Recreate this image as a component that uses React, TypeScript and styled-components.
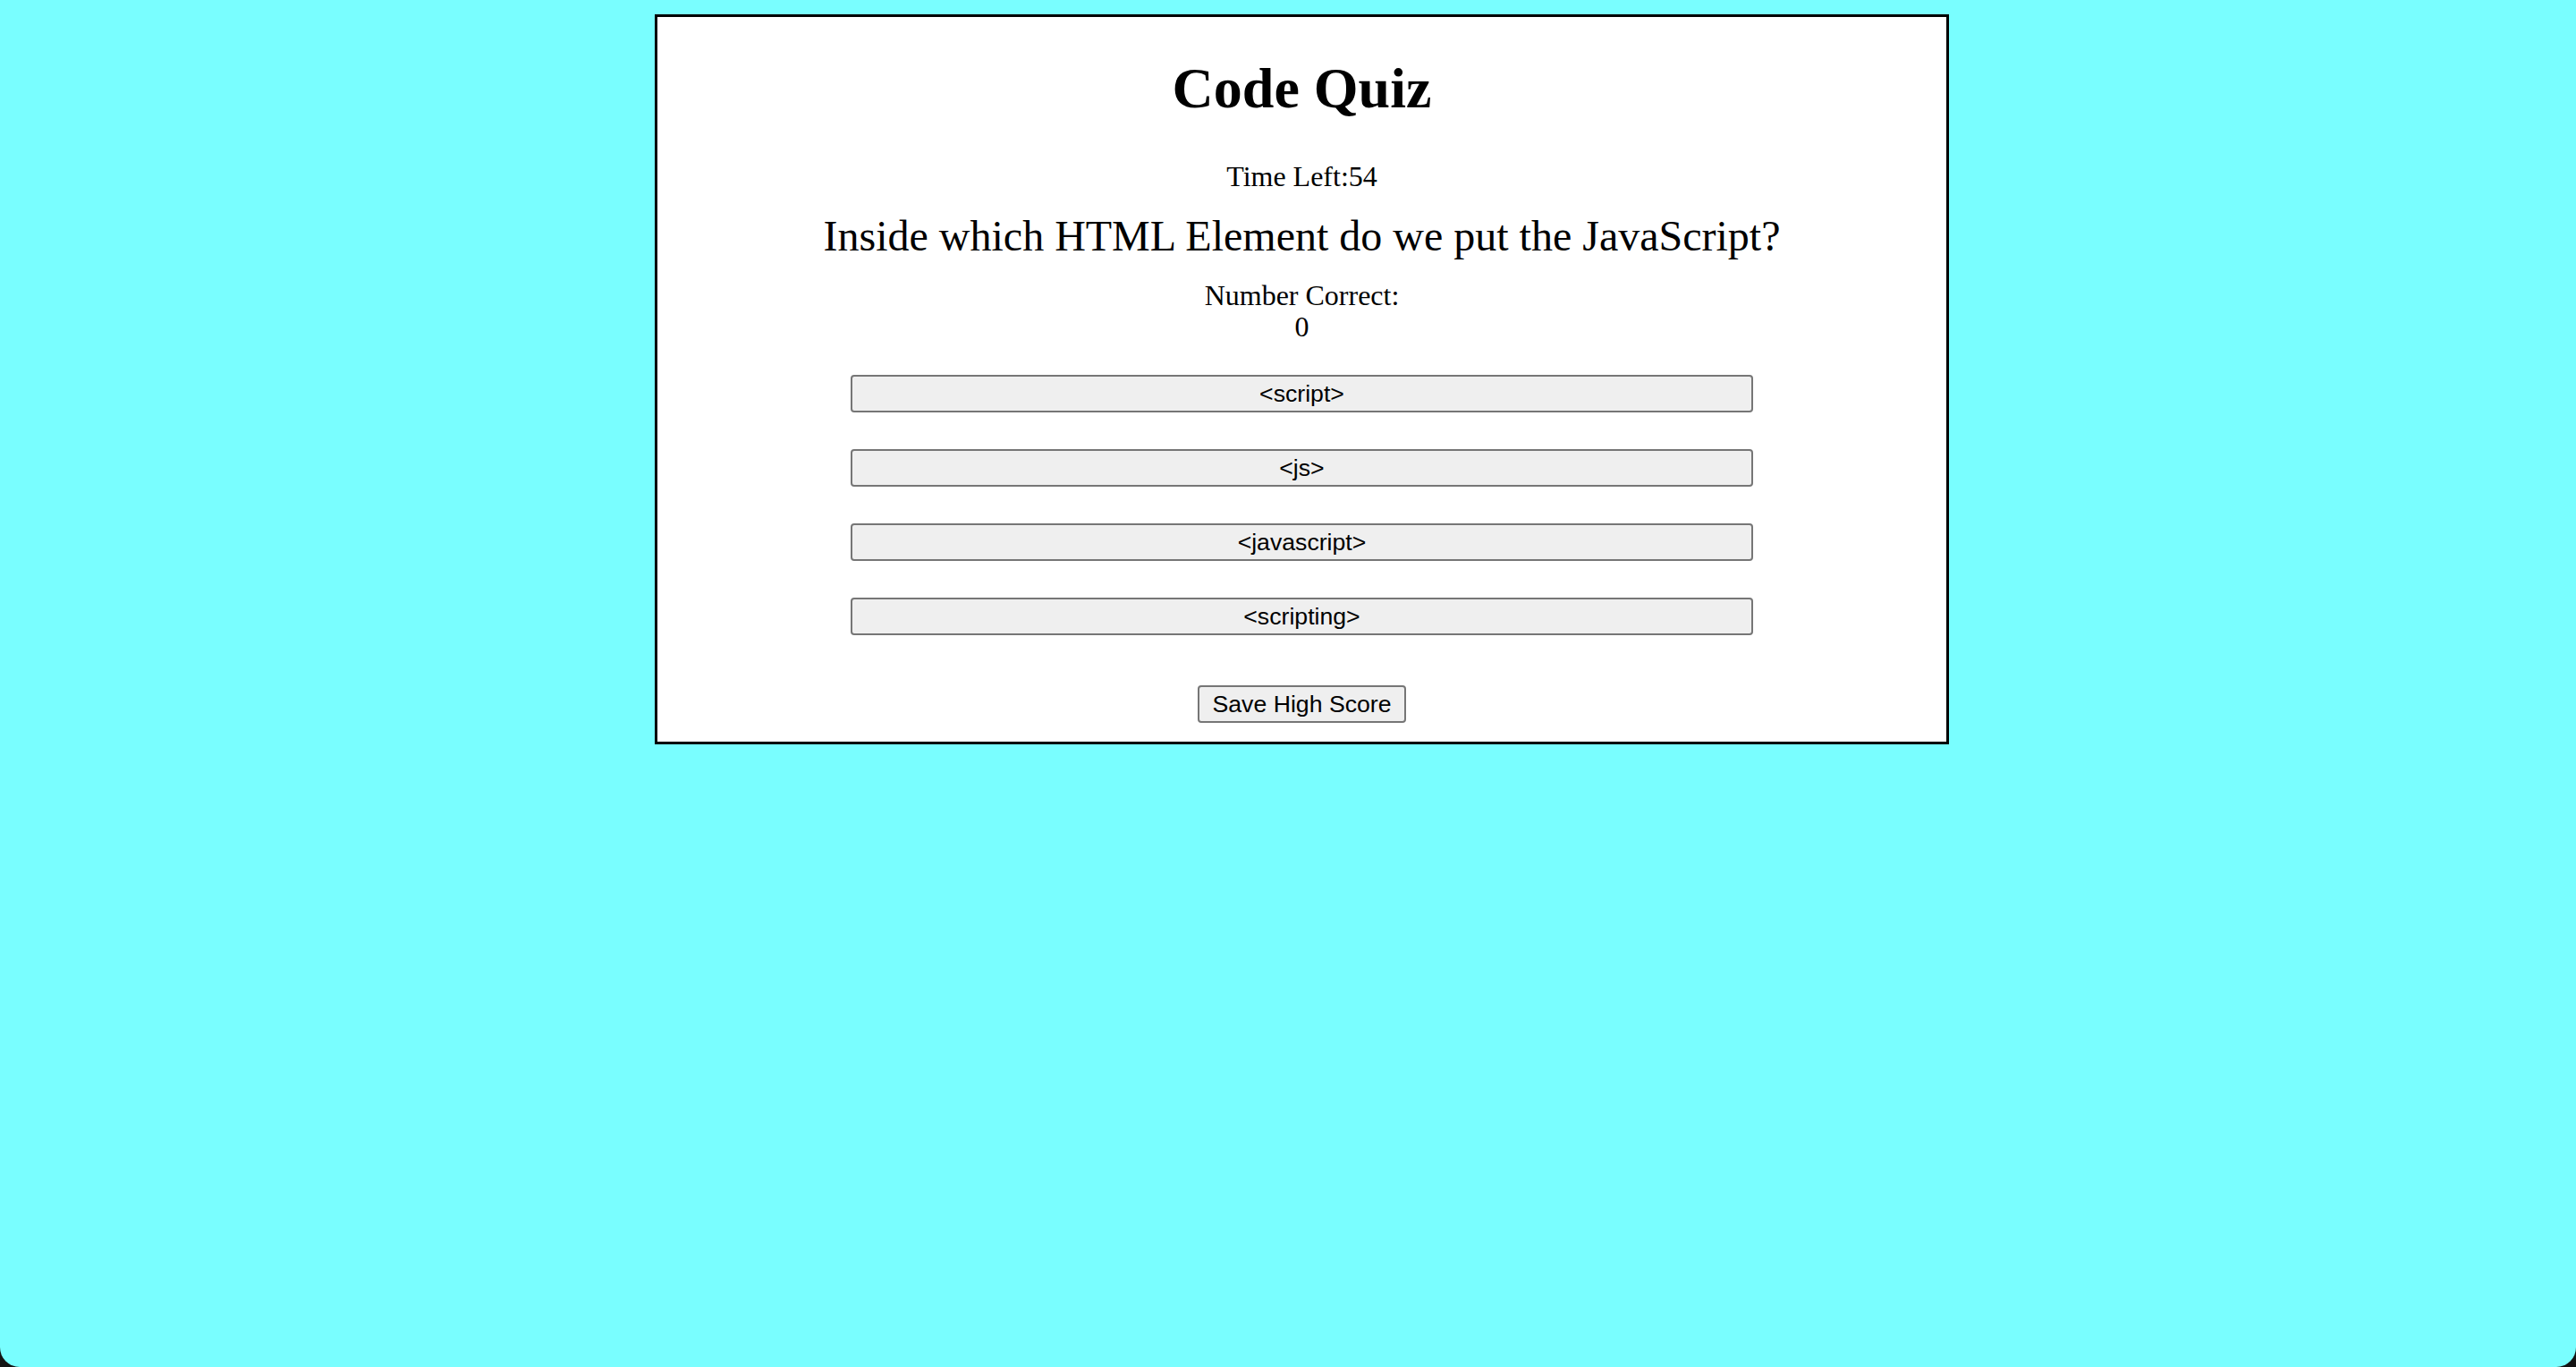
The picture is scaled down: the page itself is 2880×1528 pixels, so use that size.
import React from "react";
import styled, { createGlobalStyle } from "styled-components";

const GlobalStyle = createGlobalStyle`
  html, body {
    margin: 0;
    padding: 0;
    background: #141414;
  }
  #root {
    min-height: 1528px;
  }
`;

const Screen = styled.div`
  box-sizing: border-box;
  min-height: 1528px;
  background: #79feff;
  border-radius: 0 0 22px 22px;
  padding: 16px 0 0 31px;
  display: flex;
  justify-content: center;
  align-items: flex-start;
`;

const Card = styled.main`
  box-sizing: border-box;
  width: 1447px;
  border: 3px solid #000;
  background: #fff;
  text-align: center;
  padding-bottom: 21px;
  font-family: "Liberation Serif", "Times New Roman", serif;
  color: #000;
  display: flex;
  flex-direction: column;
  align-items: center;
`;

const Title = styled.h1`
  margin: 43px 0 43px;
  font-size: 64px;
  line-height: 74px;
  font-weight: 700;
`;

const Timer = styled.div`
  font-size: 32px;
  line-height: 37px;
`;

const Question = styled.div`
  margin-top: 20px;
  font-size: 48px;
  line-height: 55px;
`;

const Score = styled.div`
  margin-top: 22px;
  font-size: 32px;
  line-height: 35px;
`;

const Answers = styled.div`
  margin-top: 36px;
  width: 70%;
  display: flex;
  flex-direction: column;
  gap: 41px;
`;

const BaseButton = styled.button`
  box-sizing: border-box;
  height: 42px;
  border: 2px solid #767676;
  border-radius: 4px;
  background: #efefef;
  color: #000;
  font-family: "Liberation Sans", Arial, Helvetica, sans-serif;
  font-size: 26.67px;
  line-height: 30px;
  cursor: pointer;
`;

const AnswerButton = styled(BaseButton)`
  width: 100%;
  padding: 0 12px;
`;

const SaveButton = styled(BaseButton)`
  margin-top: 56px;
  padding: 0 14px;
`;

const answers = ["<script>", "<js>", "<javascript>", "<scripting>"];

export default function App() {
  return (
    <>
      <GlobalStyle />
      <Screen>
        <Card>
          <Title>Code Quiz</Title>
          <Timer>Time Left:54</Timer>
          <Question>Inside which HTML Element do we put the JavaScript?</Question>
          <Score>
            Number Correct:
            <br />0
          </Score>
          <Answers>
            {answers.map((a) => (
              <AnswerButton key={a}>{a}</AnswerButton>
            ))}
          </Answers>
          <SaveButton>Save High Score</SaveButton>
        </Card>
      </Screen>
    </>
  );
}
